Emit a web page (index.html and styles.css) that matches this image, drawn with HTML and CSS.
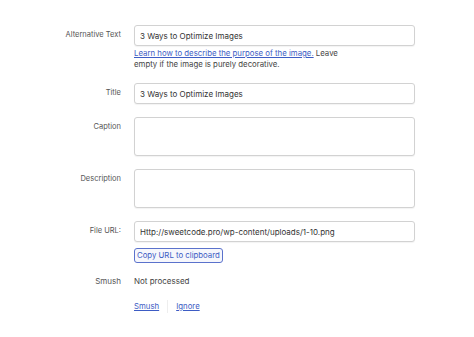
FILE: index.html
```html
<!DOCTYPE html>
<html lang="en">
<head>
  <meta charset="UTF-8">
  <title>Attachment Details</title>
  <link rel="stylesheet" href="styles.css">
</head>
<body>
<div class="details">
  <div class="row">
    <label class="label" for="altText">Alternative Text</label>
    <div class="field">
      <input class="textbox" id="altText" type="text" value="3 Ways to Optimize Images">
      <p class="help"><a href="#">Learn how to describe the purpose of the image.</a> Leave empty if the image is purely decorative.</p>
    </div>
  </div>

  <div class="row">
    <label class="label" for="title">Title</label>
    <div class="field">
      <input class="textbox" id="title" type="text" value="3 Ways to Optimize Images">
    </div>
  </div>

  <div class="row">
    <label class="label" for="caption">Caption</label>
    <div class="field">
      <textarea class="textbox area" id="caption"></textarea>
    </div>
  </div>

  <div class="row">
    <label class="label" for="description">Description</label>
    <div class="field">
      <textarea class="textbox area" id="description"></textarea>
    </div>
  </div>

  <div class="row">
    <label class="label" for="fileUrl">File URL:</label>
    <div class="field">
      <input class="textbox" id="fileUrl" type="text" readonly value="Http://sweetcode.pro/wp-content/uploads/1-10.png">
      <button class="copy-button" type="button">Copy URL to clipboard</button>
    </div>
  </div>

  <div class="row smush-row">
    <span class="label">Smush</span>
    <div class="field">
      <span class="status">Not processed</span>
      <div class="smush-links">
        <a href="#">Smush</a>
        <span class="divider"></span>
        <a href="#">Ignore</a>
      </div>
    </div>
  </div>
</div>
</body>
</html>
```

FILE: styles.css
```css
html, body {
  margin: 0;
  background-color: white;
  font-family: Inter, "Liberation Sans", sans-serif;
  color: #333;
}

/* Form grid: labels on the left, fields on the right */
.details {
  padding-top: 25px;
}

.row {
  display: grid;
  grid-template-columns: 121px 281px;
  column-gap: 13px;
  margin-bottom: 13px;
}

.label {
  text-align: right;
  font-size: 7.5px;
  line-height: 11px;
  padding-top: 4px;
  color: #555;
}

.field {
  display: flex;
  flex-direction: column;
  align-items: flex-start;
}

.textbox {
  width: 100%;
  height: 21px;
  box-sizing: border-box;
  border: 1px solid #d2d2d2;
  border-radius: 3px;
  box-shadow: 0 1px 1px rgba(0, 0, 0, 0.05);
  padding: 0 5px;
  font-family: inherit;
  font-size: 8px;
  color: #333;
  background-color: white;
  margin: 0;
}

.area {
  height: 39px;
  resize: none;
}

.help {
  margin: 2px 0 0;
  max-width: 210px;
  font-size: 7.8px;
  line-height: 11px;
  color: #444;
}

a {
  color: #3d5cc4;
}

.copy-button {
  margin-top: 6px;
  height: 15px;
  padding: 0 2px;
  border: 1px solid #5b72cc;
  border-radius: 3px;
  background-color: #f6f7fc;
  color: #3d5cc4;
  font-family: inherit;
  font-size: 7.8px;
  line-height: 13px;
  cursor: pointer;
}

.smush-row {
  margin-top: 2px;
}

.smush-row .label,
.status {
  padding-top: 0;
  font-size: 8px;
  line-height: 11px;
}

.status {
  color: #444;
}

.smush-links {
  display: flex;
  align-items: center;
  gap: 8px;
  margin-top: 13px;
  font-size: 7.8px;
  line-height: 11px;
}

.divider {
  width: 1px;
  height: 13px;
  background-color: #eee;
}
```
